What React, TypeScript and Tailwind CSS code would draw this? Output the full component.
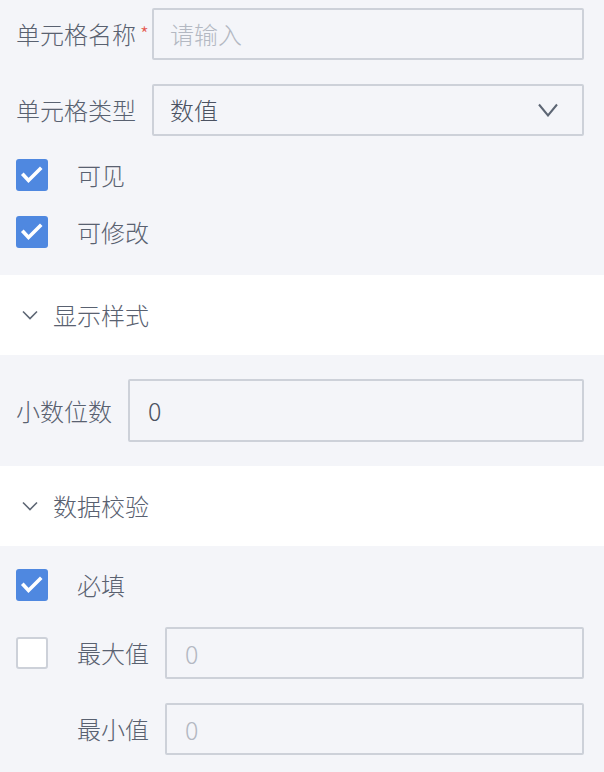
const font = "font-['Noto_Sans_CJK_SC','Noto_Sans',sans-serif] font-light";

function Check({ checked }: { checked: boolean }) {
  if (!checked) {
    return (
      <div className="w-8 h-8 shrink-0 rounded-[3px] border-2 border-[#cdd1d9] bg-white" />
    );
  }
  return (
    <div className="w-8 h-8 shrink-0 rounded-[3px] bg-[#4f88e0] flex items-center justify-center">
      <svg width="32" height="32" viewBox="0 0 32 32">
        <polyline
          points="7.5,16 12.5,21.5 24,10"
          fill="none"
          stroke="#fff"
          strokeWidth="3.6"
          strokeLinecap="square"
        />
      </svg>
    </div>
  );
}

// placeholder-only input, as in the reference
function TextBox({
  placeholder,
  digits = false,
}: {
  placeholder: string;
  digits?: boolean;
}) {
  return (
    <div
      className={`flex-1 h-[52px] flex items-center border-2 border-[#cdd1d9] rounded-[2px] text-[#b3b8c2] ${
        digits ? "pl-[18px]" : "pl-4"
      }`}
    >
      <span className={digits ? "text-[25px]" : ""}>{placeholder}</span>
    </div>
  );
}

function Section({ title }: { title: string }) {
  return (
    <div className="h-[80px] bg-white flex items-center pl-[22px]">
      <svg width="16" height="10" viewBox="0 0 16 10" className="shrink-0">
        <polyline
          points="1,1.5 8,8.5 15,1.5"
          fill="none"
          stroke="#5d6674"
          strokeWidth="1.6"
        />
      </svg>
      <span className="ml-[15px]">{title}</span>
    </div>
  );
}

export default function App() {
  return (
    <div
      className={`w-[604px] h-[772px] bg-[#f4f5f9] text-[24px] leading-none text-[#596170] ${font}`}
    >
      <div className="pl-4 pr-5 pt-2 pb-[27px]">
        <div className="flex items-center">
          <div className="w-[136px] shrink-0 relative">
            单元格名称
            <span className="absolute left-[124px] top-[2px] text-[20px] text-[#e5564e]">
              *
            </span>
          </div>
          <TextBox placeholder="请输入" />
        </div>
        <div className="flex items-center mt-6">
          <div className="w-[136px] shrink-0">单元格类型</div>
          <div className="flex-1 h-[52px] flex items-center justify-between pl-4 pr-6 border-2 border-[#cdd1d9] rounded-[2px]">
            <span className="text-[#4b5261]">数值</span>
            <svg width="20" height="14" viewBox="0 0 20 14">
              <polyline
                points="1,1.5 10,12.5 19,1.5"
                fill="none"
                stroke="#5d6674"
                strokeWidth="2"
              />
            </svg>
          </div>
        </div>
        <div className="flex items-center mt-[23px]">
          <Check checked />
          <span className="ml-[29px]">可见</span>
        </div>
        <div className="flex items-center mt-[25px]">
          <Check checked />
          <span className="ml-[29px]">可修改</span>
        </div>
      </div>

      <Section title="显示样式" />

      <div className="pl-4 pr-5 py-6">
        <div className="flex items-center">
          <div className="w-[112px] shrink-0">小数位数</div>
          <div className="flex-1 h-[63px] flex items-center pl-[18px] border-2 border-[#cdd1d9] rounded-[2px]">
            <span className="text-[#4b5261] text-[25px]">0</span>
          </div>
        </div>
      </div>

      <Section title="数据校验" />

      <div className="pl-4 pr-5 pt-[23px]">
        <div className="flex items-center">
          <Check checked />
          <span className="ml-[29px]">必填</span>
        </div>
        <div className="flex items-center mt-[26px]">
          <Check checked={false} />
          <span className="ml-[29px] w-[88px] shrink-0">最大值</span>
          <TextBox placeholder="0" digits />
        </div>
        <div className="flex items-center mt-6">
          <div className="w-[61px] shrink-0" />
          <span className="w-[88px] shrink-0">最小值</span>
          <TextBox placeholder="0" digits />
        </div>
      </div>
    </div>
  );
}
